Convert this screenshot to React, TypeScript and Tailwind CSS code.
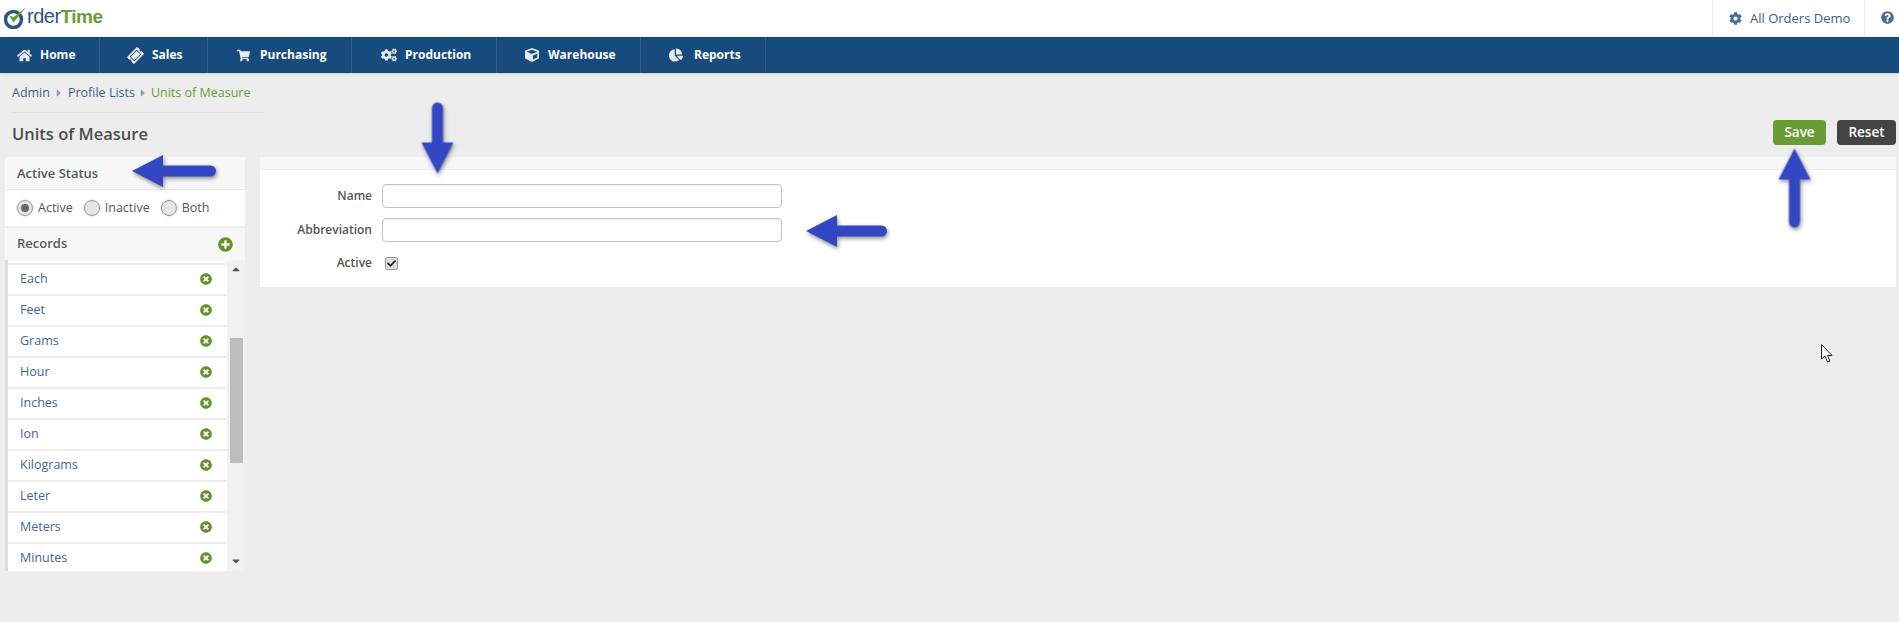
import { FaHome, FaTicketAlt, FaShoppingCart, FaCogs, FaCube, FaChartPie, FaCog, FaQuestionCircle, FaPlusCircle, FaTimesCircle, FaCaretRight, FaCaretUp, FaCaretDown, FaCheck } from "react-icons/fa";

const navItems = [
  { label: "Home", icon: FaHome, cls: "w-[100px] pl-[17px] gap-[8px]", size: 15 },
  { label: "Sales", icon: FaTicketAlt, cls: "w-[108px] pl-[28px] gap-[9px]", size: 15 },
  { label: "Purchasing", icon: FaShoppingCart, cls: "w-[144px] pl-[29px] gap-[10px]", size: 13 },
  { label: "Production", icon: FaCogs, cls: "w-[145px] pl-[29px] gap-[8px]", size: 16 },
  { label: "Warehouse", icon: FaCube, cls: "w-[144px] pl-[28px] gap-[9px]", size: 14 },
  { label: "Reports", icon: FaChartPie, cls: "w-[125px] pl-[28px] gap-[11px]", size: 14 },
];

const records = ["Each", "Feet", "Grams", "Hour", "Inches", "Ion", "Kilograms", "Leter", "Meters", "Minutes"];

// blue annotation arrow, drawn pointing left
function Arrow({ length, className }: { length: number; className: string }) {
  return (
    <svg viewBox={`0 0 ${length} 32`} width={length} height={32} className={className}>
      <path
        d={`M0 16 L31 0 V10.5 H${length - 5.5} A5.500 5.500 0 0 1 ${length - 5.5} 21.500 H31 V32 Z`}
        fill="#3347c4"
      />
    </svg>
  );
}

function Radio({ label, checked }: { label: string; checked?: boolean }) {
  return (
    <label className="flex items-center gap-[5px]">
      <span className="flex h-[16px] w-[16px] items-center justify-center rounded-full border border-[#9a9a9a] bg-[#e6e6e6] shadow-[0_0_0_1px_#eeeeee]">
        {checked && <span className="h-[8px] w-[8px] rounded-full bg-[#666666]" />}
      </span>
      <span>{label}</span>
    </label>
  );
}

export default function App() {
  return (
    <div
      className="relative h-[622px] w-full overflow-hidden bg-[#ededed] text-[13px] text-[#555555]"
      style={{ fontFamily: '"Open Sans", sans-serif' }}
    >
      {/* Top bar */}
      <div className="flex h-[37px] items-start justify-between bg-white">
        <div className="flex items-end pl-[4px] pt-[6px]">
          <svg viewBox="0 0 24 22" className="h-[22px] w-[24px]">
            <circle cx="9.500" cy="12.500" r="8" fill="none" stroke="#2b5680" strokeWidth="3.500" />
            <path d="M5 8.500 L9.500 15.500 L22 0.500 L9.500 10 Z" fill="#6a9c35" />
          </svg>
          <span className="-ml-[1px] leading-[21px] tracking-[-0.5px]" style={{ fontFamily: '"Liberation Sans", sans-serif' }}>
            <span className="text-[20px] text-[#2b5680]">rder</span>
            <span className="text-[19px] font-bold text-[#6a9c35]">Time</span>
          </span>
        </div>
        <div className="flex h-[37px] items-start">
          <div className="flex h-[37px] w-[153px] items-center gap-[8px] border-x border-[#e8e8e8] pl-[16px] text-[#3d6089]">
            <FaCog size={13} className="text-[#4a6d96]" />
            <span>All Orders Demo</span>
          </div>
          <div className="flex h-[34px] w-[34px] items-center justify-end pr-[5px] text-[#4a6d96]">
            <FaQuestionCircle size={13} />
          </div>
        </div>
      </div>

      {/* Main nav */}
      <nav className="flex h-[36px] items-center bg-[#174b7d] text-[12px] font-bold text-white shadow-[0_1px_3px_#cccccc]">
        {navItems.map((item) => (
          <div key={item.label} className={`flex h-full items-center border-r border-[#2f5f8d] ${item.cls}`}>
            <item.icon size={item.size} className={item.label === "Sales" ? "-rotate-45 text-[#e6ebf0]" : "text-[#e6ebf0]"} />
            <span>{item.label}</span>
          </div>
        ))}
      </nav>

      {/* Breadcrumb */}
      <div className="flex h-[39px] items-center pl-[12px] pt-[1px] text-[12.500px] text-[#3f5f86]">
        <span>Admin</span>
        <FaCaretRight size={12} className="mx-[3px] text-[#999999]" />
        <span>Profile Lists</span>
        <FaCaretRight size={12} className="mx-[2px] text-[#999999]" />
        <span className="text-[#6a9c35]">Units of Measure</span>
      </div>
      <div className="ml-[12px] w-[252px] border-t border-[#e2e2e2]" />

      {/* Title row */}
      <div className="flex h-[44px] items-start justify-between pl-[12px] pr-[3px] pt-[7px]">
        <h1 className="text-[16.500px] leading-[28px] font-semibold text-[#4d4d4d]">Units of Measure</h1>
        <div className="flex gap-[11px] text-[13.500px] font-semibold text-white">
          <button className="h-[25px] w-[53px] rounded-[4px] bg-[#6a9c35]">Save</button>
          <button className="h-[25px] w-[59px] rounded-[4px] bg-[#444444]">Reset</button>
        </div>
      </div>

      <div className="flex items-start gap-[15px] pl-[5px] pr-[3px]">
        {/* Left panel */}
        <aside className="w-[240px] shrink-0">
          <div className="flex h-[33px] items-center border-b border-[#e8e8e8] bg-[#f7f7f7] pl-[12px] pt-[2px] font-semibold text-[#4d5a66]">
            Active Status
          </div>
          <div className="flex h-[38px] items-center gap-[11px] border-b-2 border-[#eeeeee] bg-white pl-[12px] text-[12.500px]">
            <Radio label="Active" checked />
            <Radio label="Inactive" />
            <Radio label="Both" />
          </div>
          <div className="flex h-[32px] items-center justify-between bg-[#f7f7f7] pl-[12px] pr-[12px] font-semibold text-[#5a5a5a]">
            <span>Records</span>
            <FaPlusCircle size={15} className="text-[#5f9428]" />
          </div>
          <div className="flex h-[311px] overflow-hidden">
            <div className="w-[222px] overflow-hidden border-l-[3px] border-[#dddddd] bg-white pt-[3px]">
              {records.map((name) => (
                <div key={name} className="flex h-[31px] shrink-0 items-center justify-between border-t-2 border-[#eeeeee] pl-[12px] pr-[15px] text-[#3f6792]">
                  <span className="text-[12.500px]">{name}</span>
                  <FaTimesCircle size={12} className="-mt-[2px] text-[#5f9428]" />
                </div>
              ))}
            </div>
            {/* Scrollbar */}
            <div className="flex w-[18px] flex-col items-center bg-[#f1f1f1] px-[3px] pt-[3px]">
              <FaCaretUp size={12} className="text-[#555555]" />
              <div className="mt-[63px] h-[125px] w-[13px] shrink-0 bg-[#bdbdbd]" />
              <FaCaretDown size={12} className="mt-[92px] text-[#555555]" />
            </div>
          </div>
        </aside>

        {/* Form panel */}
        <section className="h-[130px] flex-1 bg-white">
          <div className="h-[13px] border-b border-[#eeeeee] bg-[#f7f7f7]" />
          <div className="grid grid-cols-[112px_400px] gap-x-[10px] pt-[14px] text-[#555555]">
            <span className="flex h-[24px] items-center justify-end text-[12px] font-semibold">Name</span>
            <input className="h-[24px] rounded-[4px] border border-[#c4c4c4] bg-white shadow-[inset_0_1px_2px_#eeeeee]" />
            <span className="mt-[10px] flex h-[24px] items-center justify-end text-[12px] font-semibold">Abbreviation</span>
            <input className="mt-[10px] h-[24px] rounded-[4px] border border-[#c4c4c4] bg-white shadow-[inset_0_1px_2px_#eeeeee]" />
            <span className="mt-[9px] flex h-[24px] items-center justify-end text-[12px] font-semibold">Active</span>
            <div className="mt-[9px] flex h-[24px] items-center pl-[3px]">
              <span className="flex h-[13px] w-[13px] items-center justify-center rounded-[2px] border border-[#999999] bg-[#e0e0e0]">
                <FaCheck size={9} className="text-[#222222]" />
              </span>
            </div>
          </div>
        </section>
      </div>

      {/* Annotation arrows */}
      <Arrow length={84} className="absolute left-[132px] top-[155px] drop-shadow-[1px_2px_2px_rgba(0,0,0,0.45)]" />
      <Arrow length={81} className="absolute left-[806px] top-[215px] drop-shadow-[1px_2px_2px_rgba(0,0,0,0.45)]" />
      <Arrow length={71} className="absolute left-[401.500px] top-[121.500px] -rotate-90 drop-shadow-[-2px_1px_2px_rgba(0,0,0,0.45)]" />
      <Arrow length={79} className="absolute left-[1754.500px] top-[171.500px] rotate-90 drop-shadow-[2px_-1px_2px_rgba(0,0,0,0.45)]" />

      {/* Mouse cursor */}
      <svg viewBox="0 0 13 20" className="absolute left-[1821px] top-[344px] h-[20px] w-[13px]">
        <path d="M0.500 0.500 V15 L4 12 L6.500 18 L9 17 L6.500 11.500 H11 Z" fill="#ffffff" stroke="#222222" strokeWidth="1" />
      </svg>
    </div>
  );
}
